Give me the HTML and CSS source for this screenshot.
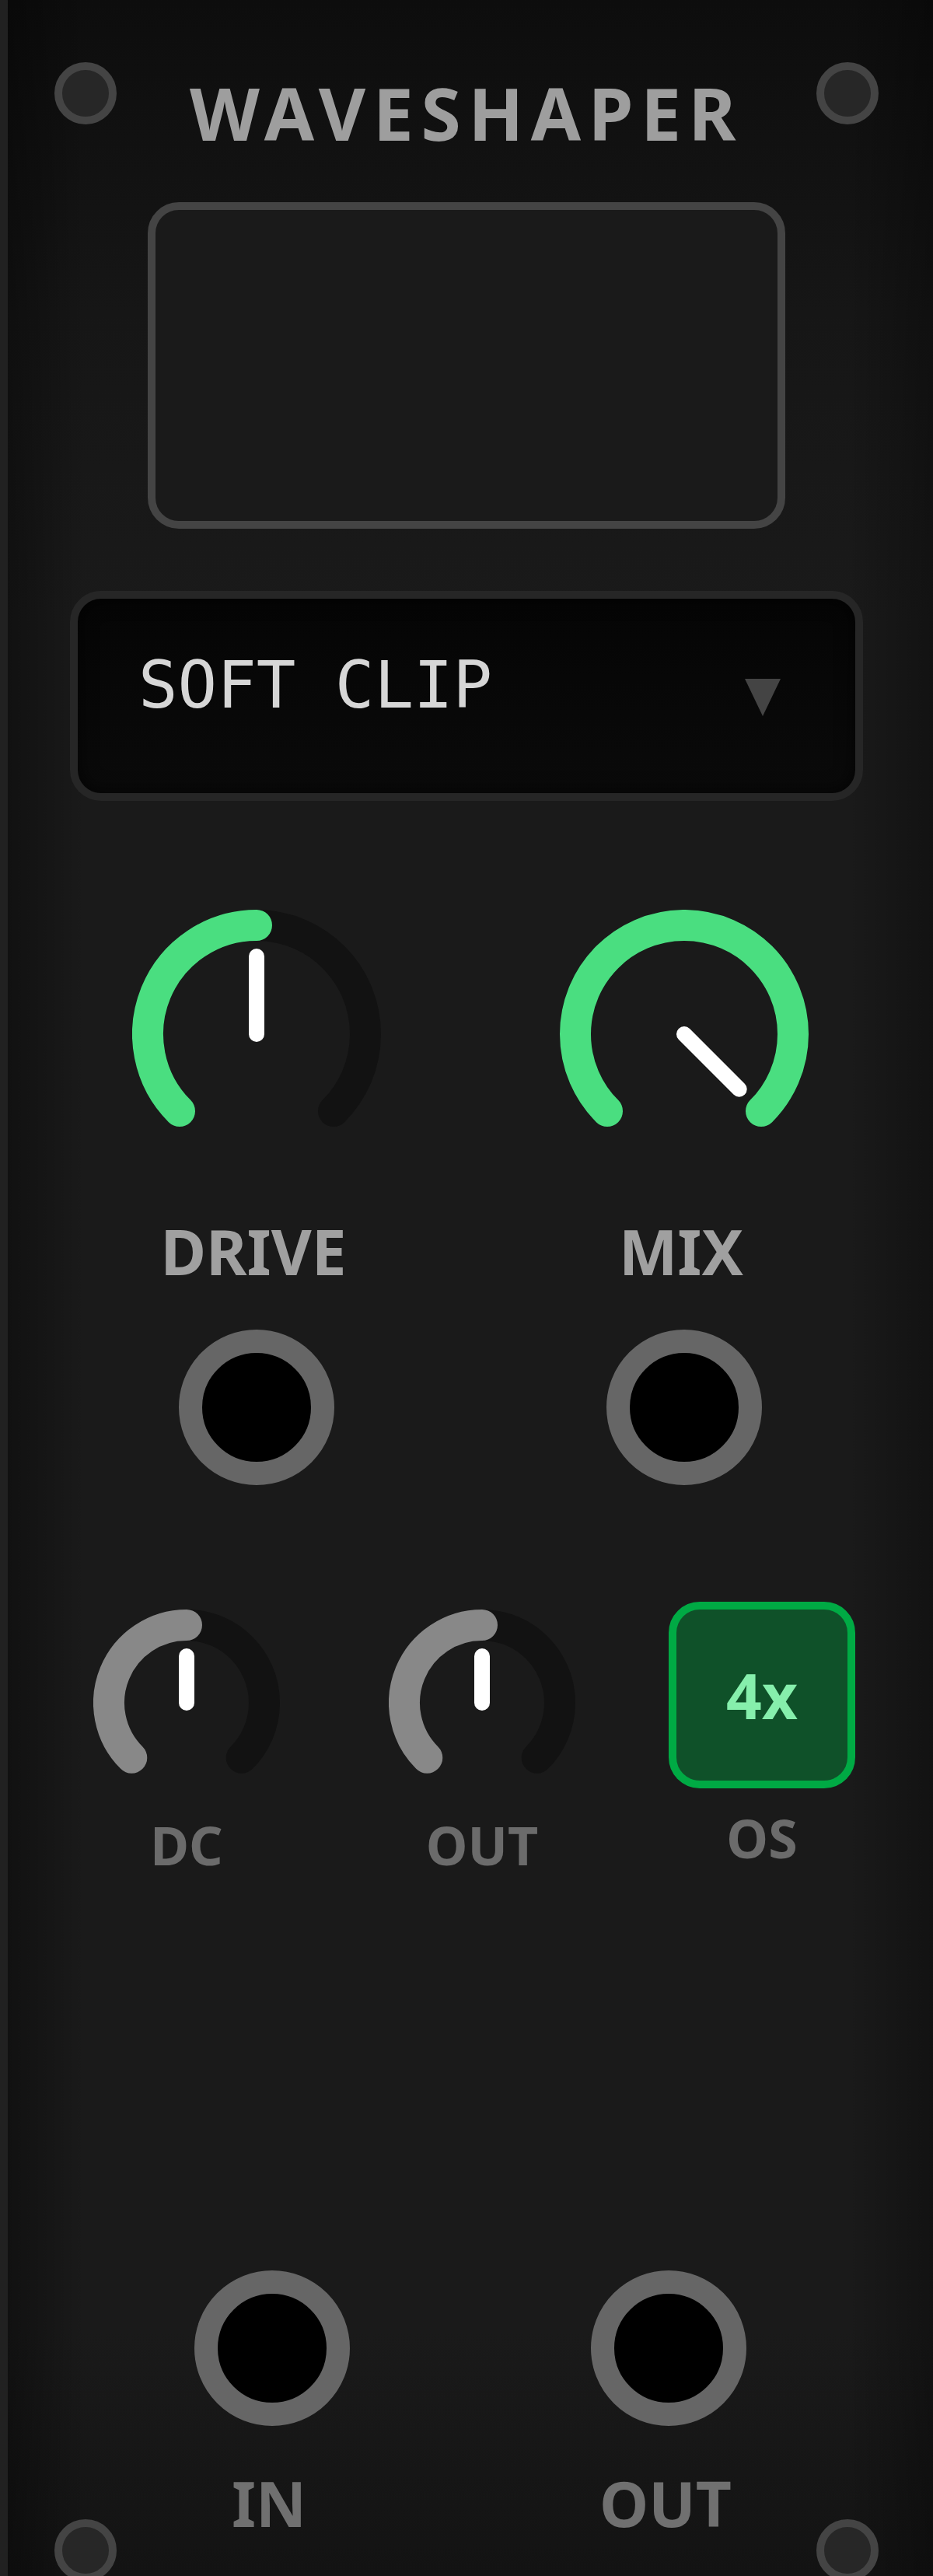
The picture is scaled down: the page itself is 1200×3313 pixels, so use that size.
FILE: index.html
```html
<!DOCTYPE html>
<html lang="en">
<head>
<meta charset="utf-8">
<title>Waveshaper</title>
<link rel="stylesheet" href="styles.css">
</head>
<body>
<div class="panel">
  <span class="screw tl"></span>
  <span class="screw tr"></span>
  <span class="screw bl"></span>
  <span class="screw br"></span>

  <h1 class="title">WAVESHAPER</h1>

  <div class="display"></div>

  <div class="select">
    <span class="select-text">SOFT CLIP</span>
    <span class="caret"></span>
  </div>

  <div class="main-row">
    <div class="control">
      <svg class="knob-lg" viewBox="0 0 320 320">
        <path class="track" d="M61.01 258.99A140 140 0 1 1 258.99 258.99"/>
        <path class="val" d="M61.01 258.99A140 140 0 0 1 160 20"/>
        <line class="ptr" x1="160" y1="160" x2="160" y2="60"/>
      </svg>
      <div class="label-lg">DRIVE</div>
      <div class="jack"></div>
    </div>
    <div class="control">
      <svg class="knob-lg" viewBox="0 0 320 320">
        <path class="track" d="M61.01 258.99A140 140 0 1 1 258.99 258.99"/>
        <path class="val" d="M61.01 258.99A140 140 0 1 1 258.99 258.99"/>
        <line class="ptr" x1="160" y1="160" x2="230.71" y2="230.71"/>
      </svg>
      <div class="label-lg">MIX</div>
      <div class="jack"></div>
    </div>
  </div>

  <div class="small-row">
    <div class="small">
      <svg class="knob-sm" viewBox="0 0 240 240">
        <path class="track" d="M49.29 190.71A100 100 0 1 1 190.71 190.71"/>
        <path class="val val-gray" d="M49.29 190.71A100 100 0 0 1 120 20"/>
        <line class="ptr" x1="120" y1="120" x2="120" y2="60"/>
      </svg>
      <div class="label-sm">DC</div>
    </div>
    <div class="small">
      <svg class="knob-sm" viewBox="0 0 240 240">
        <path class="track" d="M49.29 190.71A100 100 0 1 1 190.71 190.71"/>
        <path class="val val-gray" d="M49.29 190.71A100 100 0 0 1 120 20"/>
        <line class="ptr" x1="120" y1="120" x2="120" y2="60"/>
      </svg>
      <div class="label-sm">OUT</div>
    </div>
    <div class="small os-col">
      <div class="os-btn">4x</div>
      <div class="label-sm">OS</div>
    </div>
  </div>

  <div class="io-row">
    <div class="io">
      <div class="jack"></div>
      <div class="label-io">IN</div>
    </div>
    <div class="io">
      <div class="jack"></div>
      <div class="label-io">OUT</div>
    </div>
  </div>
</div>
</body>
</html>
```

FILE: styles.css
```css
html, body {
  margin: 0;
  padding: 0;
  background: #141414;
}

.panel {
  position: relative;
  width: 1200px;
  height: 3313px;
  box-sizing: border-box;
  overflow: hidden;
  display: flex;
  flex-direction: column;
  align-items: center;
  padding-bottom: 54px;
  background:
    linear-gradient(to right, rgba(0,0,0,0.35) 10px, rgba(0,0,0,0) 110px, rgba(0,0,0,0) 1090px, rgba(0,0,0,0.3) 1200px),
    linear-gradient(to bottom, #0d0d0d 0px, #161616 400px, #1a1a1a 800px, #1a1a1a 3000px, #131313 3313px);
  box-shadow: inset 10px 0 0 #212121;
  font-family: "Noto Sans", "Open Sans", sans-serif;
}

.screw {
  position: absolute;
  width: 80px;
  height: 80px;
  box-sizing: border-box;
  border: 10px solid #444;
  border-radius: 50%;
  background: #272727;
}
.tl { left: 70px; top: 80px; }
.tr { left: 1050px; top: 80px; }
.bl { left: 70px; top: 3240px; }
.br { left: 1050px; top: 3240px; }

.title {
  margin: 100px 0 0;
  font-size: 93px;
  line-height: 90px;
  font-weight: 700;
  letter-spacing: 9.5px;
  color: #9e9e9e;
}

.display {
  margin-top: 70px;
  width: 820px;
  height: 420px;
  box-sizing: border-box;
  border: 10px solid #444;
  border-radius: 40px;
  background: #1a1a1a;
}

.select {
  margin-top: 80px;
  width: 1020px;
  height: 270px;
  box-sizing: border-box;
  border: 10px solid #262626;
  border-radius: 40px;
  background: linear-gradient(to bottom, #050505, #0a0a0a);
  box-shadow: inset 0 0 24px rgba(0,0,0,0.7);
  display: flex;
  align-items: flex-start;
  justify-content: space-between;
  padding: 69px 96px 0 78px;
}

.select-text {
  font-family: "DejaVu Sans Mono", "Liberation Mono", monospace;
  font-size: 84px;
  line-height: 84px;
  font-weight: 400;
  color: #d6d6d6;
}

.caret {
  margin-top: 34px;
  width: 0;
  height: 0;
  border-left: 23.5px solid transparent;
  border-right: 23.5px solid transparent;
  border-top: 48px solid #444;
}

.main-row {
  align-self: stretch;
  display: flex;
  margin-top: 140px;
  padding-left: 170px;
  gap: 230px;
}

.control {
  width: 320px;
  display: flex;
  flex-direction: column;
  align-items: center;
}

.knob-lg {
  display: block;
  width: 320px;
  height: 320px;
}

.track {
  fill: none;
  stroke: #121212;
  stroke-width: 40;
  stroke-linecap: round;
}
.val {
  fill: none;
  stroke: #4ade80;
  stroke-width: 40;
  stroke-linecap: round;
}
.val-gray {
  stroke: #888;
}
.ptr {
  stroke: #fff;
  stroke-width: 20;
  stroke-linecap: round;
}

.label-lg {
  margin-top: 79px;
  padding-right: 8px;
  font-size: 80px;
  line-height: 80px;
  font-weight: 700;
  color: #a0a0a0;
}

.jack {
  margin-top: 61px;
  width: 200px;
  height: 200px;
  box-sizing: border-box;
  border: 30px solid #666;
  border-radius: 50%;
  background: #000;
}

.small-row {
  align-self: stretch;
  display: flex;
  align-items: flex-start;
  margin-top: 150px;
  padding-left: 120px;
}

.small {
  width: 240px;
  display: flex;
  flex-direction: column;
  align-items: center;
}
.small + .small {
  margin-left: 140px;
}
.small + .os-col {
  margin-left: 120px;
}

.knob-sm {
  display: block;
  margin-top: 10px;
  width: 240px;
  height: 240px;
}

.label-sm {
  margin-top: 29px;
  font-size: 68px;
  line-height: 68px;
  font-weight: 700;
  color: #6b6b6b;
}
.os-col .label-sm {
  margin-top: 30px;
}

.os-btn {
  width: 240px;
  height: 240px;
  box-sizing: border-box;
  border: 10px solid #00aa44;
  border-radius: 40px;
  background: #0f5129;
  display: flex;
  align-items: center;
  justify-content: center;
  font-size: 80px;
  line-height: 80px;
  font-weight: 700;
  color: #86efac;
}

.io-row {
  align-self: stretch;
  margin-top: auto;
  display: flex;
  padding-left: 250px;
  gap: 310px;
}

.io {
  width: 200px;
  display: flex;
  flex-direction: column;
  align-items: center;
}
.io .jack {
  margin-top: 0;
}

.label-io {
  margin-top: 59px;
  padding-right: 8px;
  font-size: 80px;
  line-height: 80px;
  font-weight: 700;
  color: #707070;
}
```
